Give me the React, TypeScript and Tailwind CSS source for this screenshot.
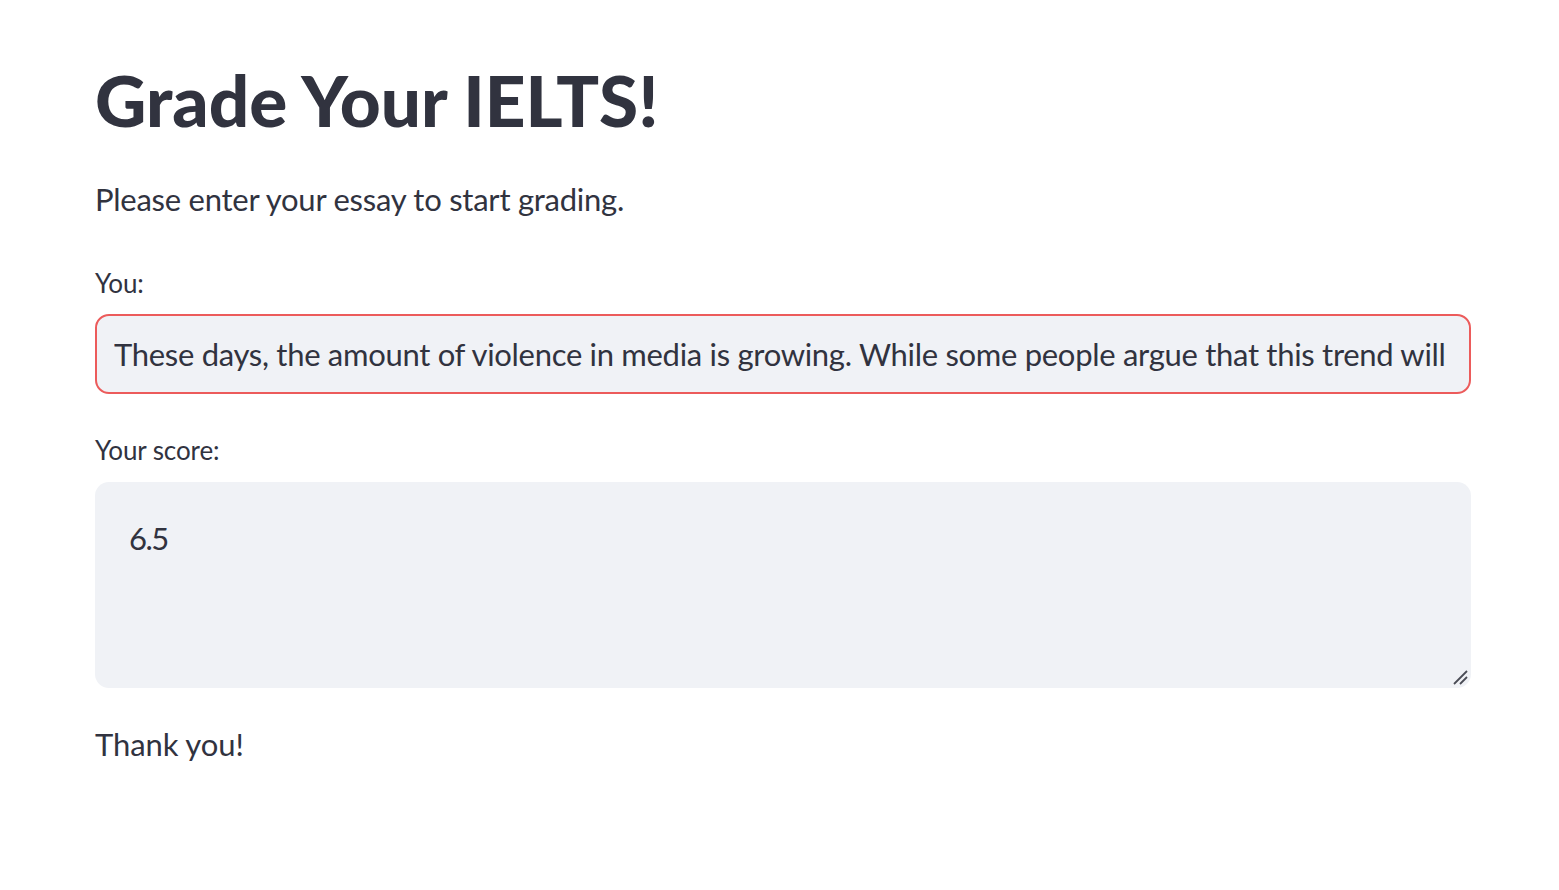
import { useState } from 'react';

const essay =
  'These days, the amount of violence in media is growing. While some people argue that this trend will have negative effects on society, others believe it has little impact.';

const App: React.FC = () => {
  const [texto, setTexto] = useState(essay);
  const [score, setScore] = useState('6.5');

  return (
    <div className="min-h-screen bg-white text-[#31333f] font-['Lato','Noto_Sans',sans-serif]">
      <div className="px-[95px] pt-[58px] pr-[88px]">
        <h1 className="text-[71px] leading-[84px] font-black">Grade Your IELTS!</h1>

        <p className="mt-[35px] text-[31px] leading-[44px] tracking-[-0.25px]">Please enter your essay to start grading.</p>

        <label className="block mt-[47px] text-[26px] leading-[30px] tracking-[-0.1px]">You:</label>
        <input
          type="text"
          value={texto}
          onChange={(e) => setTexto(e.target.value)}
          className="mt-[16px] block w-full h-[80px] rounded-[14px] border-2 border-[#ec5b5b] bg-[#f0f2f6] px-[17px] text-[31px] tracking-[-0.3px] outline-none"
        />

        <label className="block mt-[41px] text-[26px] leading-[30px] tracking-[-0.1px]">Your score:</label>
        <div className="relative mt-[17px]">
          <textarea
            value={score}
            onChange={(e) => setScore(e.target.value)}
            className="block w-full h-[206px] rounded-[14px] bg-[#f0f2f6] px-[34px] pt-[36px] text-[31px] leading-[40px] tracking-[-1.5px] outline-none resize-none"
          />
          <svg className="absolute right-[2px] bottom-[2px] pointer-events-none" width="18" height="18" viewBox="0 0 18 18">
            <path d="M3 16 L16 3" stroke="#4a4c55" strokeWidth="1.8" />
            <path d="M9 16 L16 9" stroke="#4a4c55" strokeWidth="1.8" />
          </svg>
        </div>

        <p className="mt-[36px] text-[31px] leading-[40px] tracking-[-0.1px]">Thank you!</p>
      </div>
    </div>
  );
};

export default App;
